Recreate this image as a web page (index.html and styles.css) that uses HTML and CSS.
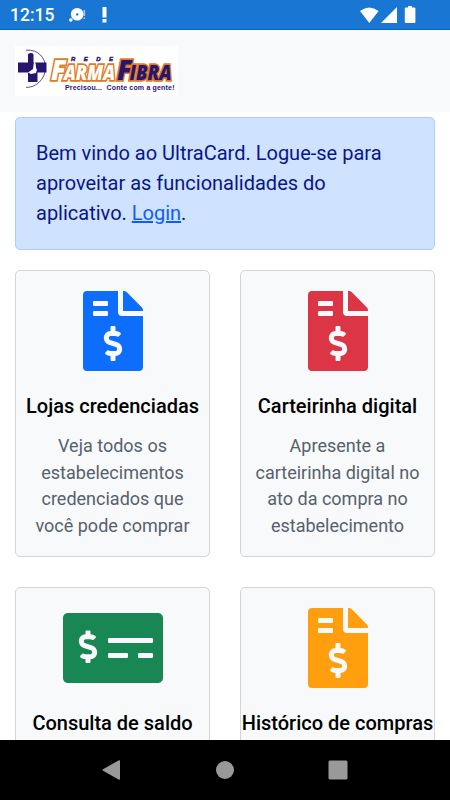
FILE: index.html
```
<!DOCTYPE html>
<html lang="pt-BR">
<head>
    <meta charset="UTF-8">
    <meta name="viewport" content="width=device-width, initial-scale=1.0">
    <title>UltraCard</title>
    <link rel="stylesheet" href="styles.css">
</head>
<body>
    <svg class="symbols" aria-hidden="true">
        <symbol id="invoice" viewBox="0 0 384 512">
            <path d="M377 105L279.1 7c-4.5-4.5-10.6-7-17-7H256v128h128v-6.1c0-6.3-2.5-12.4-7-16.9zm-153 31V0H24C10.7 0 0 10.7 0 24v464c0 13.3 10.7 24 24 24h336c13.3 0 24-10.7 24-24V160H248c-13.2 0-24-10.8-24-24zM64 72c0-4.42 3.58-8 8-8h80c4.42 0 8 3.58 8 8v16c0 4.42-3.58 8-8 8H72c-4.42 0-8-3.58-8-8V72zm0 80v-16c0-4.42 3.58-8 8-8h80c4.42 0 8 3.58 8 8v16c0 4.42-3.58 8-8 8H72c-4.42 0-8-3.58-8-8zm144 263.88V440c0 4.42-3.58 8-8 8h-16c-4.42 0-8-3.58-8-8v-24.29c-11.29-.58-22.27-4.52-31.37-11.35-3.9-2.93-4.1-8.77-.57-12.14l11.75-11.21c2.77-2.64 6.89-2.76 10.13-.73 3.87 2.42 8.26 3.72 12.82 3.72h28.11c6.5 0 11.8-5.92 11.8-13.19 0-5.95-3.61-11.19-8.77-12.73l-45-13.5c-18.59-5.58-31.58-23.42-31.58-43.39 0-24.52 19.05-44.44 42.67-45.07V232c0-4.42 3.58-8 8-8h16c4.42 0 8 3.58 8 8v24.29c11.29.58 22.27 4.51 31.37 11.35 3.9 2.93 4.1 8.77.57 12.14l-11.75 11.21c-2.77 2.64-6.89 2.76-10.13.73-3.87-2.43-8.26-3.72-12.82-3.72h-28.11c-6.5 0-11.8 5.92-11.8 13.19 0 5.95 3.61 11.19 8.77 12.73l45 13.5c18.59 5.58 31.58 23.42 31.58 43.39 0 24.53-19.05 44.44-42.67 45.07z"/>
        </symbol>
        <symbol id="check" viewBox="0 0 640 512">
            <path d="M608 32H32C14.33 32 0 46.33 0 64v384c0 17.67 14.33 32 32 32h576c17.67 0 32-14.33 32-32V64c0-17.67-14.33-32-32-32zM176 327.88V344c0 4.42-3.58 8-8 8h-16c-4.42 0-8-3.58-8-8v-16.29c-11.29-.58-22.27-4.52-31.37-11.35-3.9-2.93-4.1-8.77-.57-12.14l11.75-11.21c2.77-2.64 6.89-2.76 10.13-.73 3.87 2.42 8.26 3.72 12.82 3.72h28.11c6.5 0 11.8-5.92 11.8-13.19 0-5.95-3.61-11.19-8.77-12.73l-45-13.5c-18.59-5.58-31.58-23.42-31.58-43.39 0-24.52 19.05-44.44 42.67-45.07V152c0-4.42 3.58-8 8-8h16c4.42 0 8 3.58 8 8v16.29c11.29.58 22.27 4.51 31.37 11.35 3.9 2.93 4.1 8.77.57 12.14l-11.75 11.21c-2.77 2.64-6.89 2.76-10.13.73-3.87-2.43-8.26-3.72-12.82-3.72h-28.11c-6.5 0-11.8 5.92-11.8 13.19 0 5.95 3.61 11.19 8.77 12.73l45 13.5c18.59 5.58 31.58 23.42 31.58 43.39 0 24.53-19.05 44.44-42.67 45.07zM416 312c0 4.42-3.58 8-8 8H296c-4.42 0-8-3.58-8-8v-16c0-4.42 3.58-8 8-8h112c4.42 0 8 3.58 8 8v16zm160 0c0 4.42-3.58 8-8 8h-80c-4.42 0-8-3.58-8-8v-16c0-4.42 3.58-8 8-8h80c4.42 0 8 3.58 8 8v16zm0-96c0 4.42-3.58 8-8 8H296c-4.42 0-8-3.58-8-8v-16c0-4.42 3.58-8 8-8h272c4.42 0 8 3.58 8 8v16z"/>
        </symbol>
    </svg>

    <div class="status-bar">
        <span class="clock">12:15</span>
        <svg class="status-left" width="42" height="18" viewBox="0 0 42 18">
            <circle cx="9.2" cy="8.2" r="6.3"/>
            <circle cx="2.8" cy="14" r="1.8"/>
            <circle cx="9.2" cy="8.4" r="1.2" class="hole"/>
            <path d="M15.5 4h1.6v6h-1.6zM15.500 11.500h1.6V13h-1.6z" class="faded"/>
            <path d="M34.500 1h4v10.5h-4zM34.500 13h4v3.5h-4z"/>
        </svg>
        <svg class="status-right" width="56" height="18" viewBox="0 0 56 18">
            <path d="M0 5.1Q9.2-2.3 18.6 5.1L9.3 17z"/>
            <path d="M37 1v16H21z"/>
            <path d="M48 0h4v1.6h2.4q1 0 1 1V16q0 1-1 1h-8.6q-1 0-1-1V2.600q0-1 1-1H48z"/>
        </svg>
    </div>

    <nav class="navbar">
        <svg class="logo" width="163" height="50" viewBox="0 0 163 50">
            <rect width="163" height="50" fill="#fff"/>
            <path d="M11 4.200C23 3 31 12 30.500 22.500S21 42 11 41.300" fill="none" stroke="#4a3b82" stroke-width=".9"/>
            <path d="M13 8q3-2 5.500 0v8.500h13v10h-9V36H13v-9.500H3V16.500h10z" fill="#27156f"/>
            <path d="M19 15.500c3 2 1 6 3 8l-1 3.500-5 1-3-1.500 5-3.500z" fill="#fff"/>
            <text x="56" y="14.500" class="rede" textLength="42">REDE</text>
            <text y="34" class="farma"><tspan x="36" class="big" textLength="15" lengthAdjust="spacingAndGlyphs">F</tspan><tspan x="49" textLength="51" lengthAdjust="spacingAndGlyphs">ARMA</tspan></text>
            <text y="34" class="fibra"><tspan x="102" class="big" textLength="15" lengthAdjust="spacingAndGlyphs">F</tspan><tspan x="114.500" textLength="42" lengthAdjust="spacingAndGlyphs">IBRA</tspan></text>
            <text x="50" y="44" class="slogan" textLength="37">Precisou...</text>
            <text x="91.500" y="44" class="slogan" textLength="68">Conte com a gente!</text>
        </svg>
    </nav>

    <main class="content">
        <div class="alert">
            Bem vindo ao UltraCard. Logue-se para aproveitar as funcionalidades do aplicativo. <a href="#">Login</a>.
        </div>

        <div class="cards">
            <div class="card">
                <svg class="icon blue"><use href="#invoice"/></svg>
                <h5>Lojas credenciadas</h5>
                <p>Veja todos os estabelecimentos credenciados que você pode comprar</p>
            </div>
            <div class="card">
                <svg class="icon red"><use href="#invoice"/></svg>
                <h5>Carteirinha digital</h5>
                <p>Apresente a carteirinha digital no ato da compra no estabelecimento</p>
            </div>
            <div class="card">
                <svg class="icon green"><use href="#check"/></svg>
                <h5>Consulta de saldo</h5>
            </div>
            <div class="card">
                <svg class="icon orange"><use href="#invoice"/></svg>
                <h5>Histórico de compras</h5>
            </div>
        </div>
    </main>

    <div class="system-nav">
        <svg width="20" height="20" viewBox="0 0 20 20"><path d="M1 9.200L17 .2q1-.3 1 .8v18q0 1-1 .7L1 10.800q-1-.8 0-1.600z"/></svg>
        <svg width="20" height="20" viewBox="0 0 20 20"><circle cx="10" cy="10" r="9"/></svg>
        <svg width="20" height="20" viewBox="0 0 20 20"><rect x=".5" y=".5" width="19" height="19" rx="1.500"/></svg>
    </div>
</body>
</html>
```
FILE: styles.css
```
* {
    box-sizing: border-box;
}

body {
    margin: 0;
    height: 100vh;
    display: flex;
    flex-direction: column;
    overflow: hidden;
    background: #fff;
    color: #000;
    font-family: Roboto, "Liberation Sans", sans-serif;
    font-size: 20px;
    line-height: 1.5;
}

.symbols {
    display: none;
}

.status-bar {
    flex: none;
    height: 30px;
    display: flex;
    align-items: center;
    padding: 0 34px 0 10px;
    background: #1976d2;
    border-bottom: 1px solid #0d62cc;
    color: #fff;
    fill: #fff;
}

.clock {
    width: 58px;
    padding-top: 1px;
    font-size: 17.5px;
    font-weight: 500;
}

.status-right {
    margin-left: auto;
}

.hole {
    fill: #1976d2;
}

.faded {
    fill: #a9cbee;
}

.navbar {
    flex: none;
    height: 82px;
    display: flex;
    align-items: center;
    padding: 0 15px;
    background: #f8f9fa;
}

.logo text {
    font-family: "Liberation Sans", sans-serif;
    font-weight: bold;
}

.logo .rede {
    font-size: 6px;
    font-style: italic;
    fill: #27156f;
    stroke: #27156f;
    stroke-width: 0.4px;
}

.logo .farma,
.logo .fibra {
    font-family: "Open Sans", sans-serif;
    font-size: 20.5px;
    font-style: italic;
    font-weight: 800;
    paint-order: stroke;
    stroke: #e27a1f;
    stroke-width: 3.4px;
}

.logo .big {
    font-size: 29px;
}

.farma {
    fill: #fff;
}

.fibra {
    fill: #27156f;
}

.logo .slogan {
    font-size: 7px;
    fill: #27156f;
}

.content {
    flex: 1;
    min-height: 0;
    overflow: hidden;
    padding: 5px 15px 0;
}

.alert {
    height: 133px;
    padding: 20px;
    margin-bottom: 20px;
    background: #cfe2ff;
    border: 1px solid #a9ceff;
    border-radius: 5px;
    color: #08168a;
}

.alert a {
    color: #0d5dfd;
}

.cards {
    display: grid;
    grid-template-columns: 1fr 1fr;
    gap: 30px;
}

.card {
    height: 287px;
    padding-top: 20px;
    display: flex;
    flex-direction: column;
    align-items: center;
    background: #f8f9fa;
    border: 1px solid #d3d5d7;
    border-radius: 5px;
    text-align: center;
}

.icon {
    flex: none;
    width: 100px;
    height: 80px;
}

.blue {
    fill: #0d6efd;
}

.red {
    fill: #dc3545;
}

.green {
    fill: #198754;
}

.orange {
    fill: #ff9f0e;
}

h5 {
    margin: 23px 0 10px;
    font-size: 20px;
    font-weight: 500;
    line-height: 24px;
    white-space: nowrap;
}

.card p {
    margin: 5px 0 0;
    padding: 0 14px;
    color: #56616c;
    font-size: 18px;
    line-height: 26.7px;
}

.system-nav {
    flex: none;
    height: 60px;
    display: flex;
    align-items: center;
    justify-content: space-between;
    padding: 0 102px;
    background: #000;
    fill: #999;
}
```
